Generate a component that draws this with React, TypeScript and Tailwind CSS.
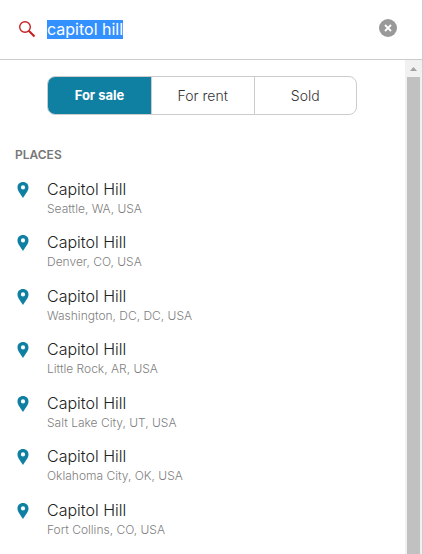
import { useEffect, useRef, useState } from "react";

const places = [
  "Seattle, WA, USA",
  "Denver, CO, USA",
  "Washington, DC, DC, USA",
  "Little Rock, AR, USA",
  "Salt Lake City, UT, USA",
  "Oklahoma City, OK, USA",
  "Fort Collins, CO, USA",
];

const filters = ["For sale", "For rent", "Sold"];

function SearchIcon() {
  return (
    <svg width="18" height="18" viewBox="0 0 18 18" fill="none" stroke="#c82021" aria-hidden="true">
      <circle cx="6" cy="6" r="5.3" strokeWidth="1.4" />
      <path d="M9.8 9.8 15.5 15.5" strokeWidth="2.1" />
    </svg>
  );
}

function PinIcon() {
  return (
    <svg width="12" height="16" viewBox="0 0 12 16" className="mt-[3px] shrink-0" aria-hidden="true">
      <path
        fill="#1080a2"
        fillRule="evenodd"
        d="M6 0C2.7 0 .5 2.4.5 5.4.5 9.3 4 12.2 6 16c2-3.8 5.5-6.7 5.5-10.6C11.5 2.4 9.3 0 6 0Zm0 3.300a2.100 2.100 0 1 1 0 4.200 2.100 2.100 0 0 1 0-4.200Z"
      />
    </svg>
  );
}

function ClearIcon() {
  return (
    <svg width="18" height="18" viewBox="0 0 18 18" aria-hidden="true">
      <circle cx="9" cy="9" r="9" fill="#999" />
      <path d="m6 6 6 6m0-6-6 6" stroke="#fff" strokeWidth="1.8" />
    </svg>
  );
}

function ScrollBar() {
  return (
    <div className="flex w-[17px] shrink-0 flex-col items-center bg-[#f1f1f1]" aria-hidden="true">
      <div className="flex h-[17px] items-center">
        <svg width="7" height="4" viewBox="0 0 7 4">
          <path d="M0 4 3.5 0 7 4Z" fill="#a3a3a3" />
        </svg>
      </div>
      <div className="w-[13px] flex-1 bg-[#c1c1c1]" />
    </div>
  );
}

export default function App() {
  const [query, setQuery] = useState("capitol hill");
  const [active, setActive] = useState("For sale");
  const input = useRef<HTMLInputElement>(null);

  useEffect(() => {
    input.current?.focus();
    input.current?.select();
  }, []);

  return (
    <div className="flex h-screen flex-col overflow-hidden border-r border-[#ccc] bg-white font-['Inter',sans-serif] text-[#333]">
      <form
        className="flex h-[60px] shrink-0 items-center border-b border-[#ccc] pr-[25px] pl-[19px]"
        onSubmit={(e) => e.preventDefault()}
      >
        <SearchIcon />
        <input
          ref={input}
          type="text"
          aria-label="Search places"
          value={query}
          onChange={(e) => setQuery(e.target.value)}
          className="ml-[10px] min-w-0 flex-1 text-base leading-[19px] outline-none selection:bg-[#3390ff] selection:text-white"
        />
        <button type="button" aria-label="Clear search" onClick={() => setQuery("")} className="mb-1">
          <ClearIcon />
        </button>
      </form>

      <div className="flex min-h-0 flex-1">
        <main className="min-w-0 flex-1 overflow-hidden pt-4">
          <div className="mr-12 ml-[47px] grid h-[39px] grid-cols-[103px_1fr_1fr] overflow-hidden rounded-lg border border-[#ccc]">
            {filters.map((name) => (
              <button
                key={name}
                type="button"
                aria-pressed={active === name}
                onClick={() => setActive(name)}
                className={
                  "border-l border-[#ccc] text-sm first:border-l-0 " +
                  (active === name ? "bg-[#1080a2] text-[13px] font-bold text-white" : "font-light text-[#333]")
                }
              >
                {name}
              </button>
            ))}
          </div>

          <h2 className="mt-8 ml-[15px] text-xs leading-4 font-semibold text-[#767676]">PLACES</h2>

          <ul className="mt-4">
            {places.map((place) => (
              <li key={place} className="pb-[14px] even:pb-[15px]">
                <a href="#" className="flex gap-[18px] pl-[17px]">
                  <PinIcon />
                  <span className="flex flex-col">
                    <span className="text-base leading-5 font-light text-[#222]">Capitol Hill</span>
                    <span className="text-xs leading-[19px] font-light text-[#808080]">{place}</span>
                  </span>
                </a>
              </li>
            ))}
          </ul>
        </main>
        <ScrollBar />
      </div>
    </div>
  );
}
